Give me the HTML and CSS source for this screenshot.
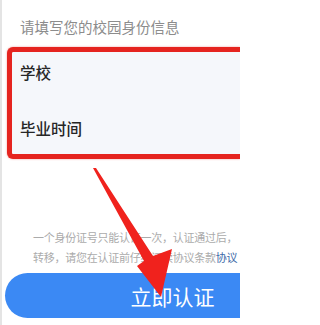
FILE: index.html
```html
<!DOCTYPE html>
<html lang="zh-CN">
<head>
<meta charset="utf-8">
<title>校园身份认证</title>
<link rel="stylesheet" href="styles.css">
</head>
<body>
<div class="screen">
  <p class="title">请填写您的校园身份信息</p>
  <div class="form-box">
    <div class="field">学校</div>
    <div class="field">毕业时间</div>
  </div>
  <p class="notice"><span class="line">一个身份证号只能认证一次，认证通过后，</span><span class="line">转移，请您在认证前仔细阅读协议条款<span class="link">协议</span></span></p>
  <button class="submit">立即认证</button>
</div>
<svg class="arrow" width="240" height="325" viewBox="0 0 240 325" xmlns="http://www.w3.org/2000/svg">
  <polygon points="93,168 96,168 153,256 172,249 161,297 137,266 144,261" fill="#f0221d"/>
</svg>
</body>
</html>
```
FILE: styles.css
```css
html, body {
  margin: 0;
  padding: 0;
  background: #ffffff;
}
body {
  font-family: "Noto Sans CJK SC", "Noto Sans", sans-serif;
  width: 240px;
  height: 325px;
  overflow: hidden;
  position: relative;
}
.screen {
  width: 240px;
  height: 325px;
  border-left: 2px solid #e4e4e4;
  box-sizing: border-box;
  display: flex;
  flex-direction: column;
}
.title {
  margin: 17px 0 0 18px;
  font-size: 14.5px;
  line-height: 20px;
  color: #8c8c8c;
  white-space: nowrap;
}
.form-box {
  margin: 10px 0 0 5px;
  border: 5px solid #e5241f;
  border-right: none;
  border-radius: 6px 0 0 6px;
  background: #f5f7fb;
  box-shadow: 0 0 2px rgba(229, 36, 31, 0.5);
  display: flex;
  flex-direction: column;
  gap: 16px;
  padding: 0 0 6px 8px;
}
.field {
  height: 40px;
  line-height: 40px;
  font-size: 15.5px;
  font-weight: 500;
  color: #262626;
}
.notice {
  margin: 68px 0 0 31px;
  font-size: 11px;
  line-height: 20px;
  letter-spacing: -0.25px;
  color: #ababab;
  display: flex;
  flex-direction: column;
}
.line {
  white-space: nowrap;
}
.link {
  color: #3e6aa8;
}
.submit {
  margin: 6px 0 0 3px;
  height: 45px;
  border: none;
  border-radius: 23px 0 0 23px;
  background: #3b89f4;
  color: #ffffff;
  font-family: "Noto Sans CJK SC", "Noto Sans", sans-serif;
  font-size: 21px;
  font-weight: 400;
  padding: 0 0 0 100px;
  text-align: center;
}
.arrow {
  position: absolute;
  left: 0;
  top: 0;
}
```
